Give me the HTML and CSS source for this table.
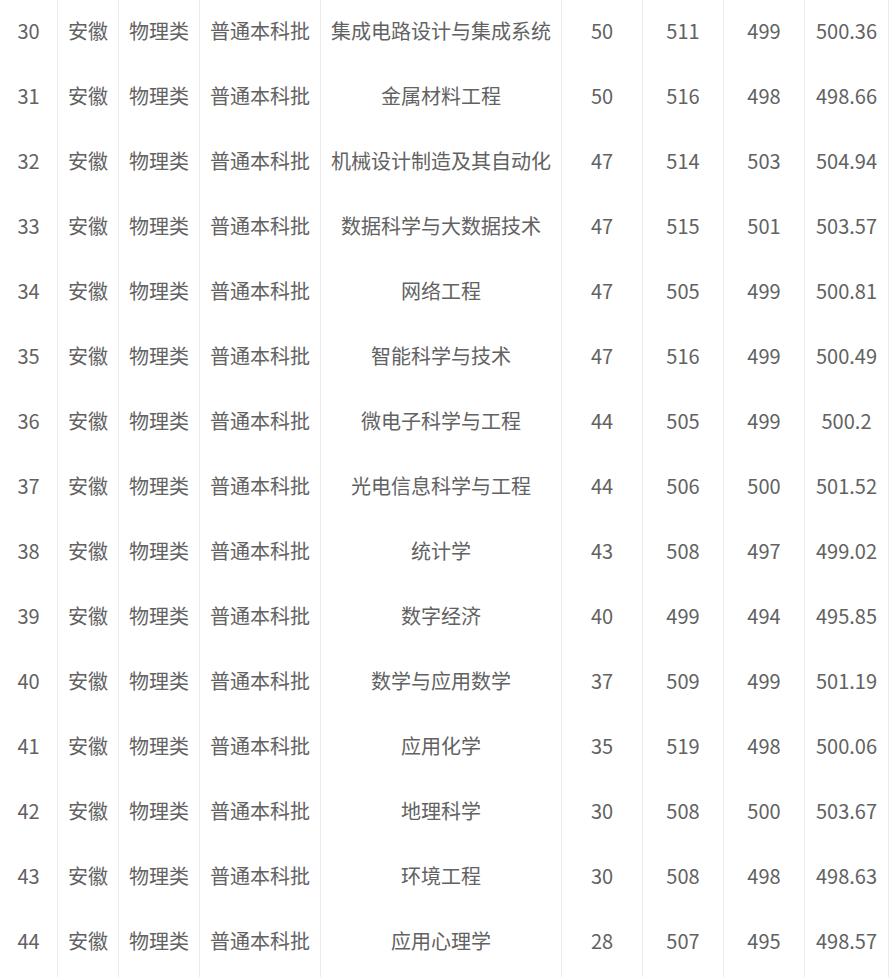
FILE: index.html
```html
<!DOCTYPE html>
<html lang="zh-CN">
<head>
<meta charset="utf-8">
<title>录取分数</title>
<link rel="stylesheet" href="styles.css">
</head>
<body>
<div class="table">
  <div class="row"><div class="c">30</div><div class="c">安徽</div><div class="c">物理类</div><div class="c">普通本科批</div><div class="c">集成电路设计与集成系统</div><div class="c">50</div><div class="c">511</div><div class="c">499</div><div class="c">500.36</div></div>
  <div class="row"><div class="c">31</div><div class="c">安徽</div><div class="c">物理类</div><div class="c">普通本科批</div><div class="c">金属材料工程</div><div class="c">50</div><div class="c">516</div><div class="c">498</div><div class="c">498.66</div></div>
  <div class="row"><div class="c">32</div><div class="c">安徽</div><div class="c">物理类</div><div class="c">普通本科批</div><div class="c">机械设计制造及其自动化</div><div class="c">47</div><div class="c">514</div><div class="c">503</div><div class="c">504.94</div></div>
  <div class="row"><div class="c">33</div><div class="c">安徽</div><div class="c">物理类</div><div class="c">普通本科批</div><div class="c">数据科学与大数据技术</div><div class="c">47</div><div class="c">515</div><div class="c">501</div><div class="c">503.57</div></div>
  <div class="row"><div class="c">34</div><div class="c">安徽</div><div class="c">物理类</div><div class="c">普通本科批</div><div class="c">网络工程</div><div class="c">47</div><div class="c">505</div><div class="c">499</div><div class="c">500.81</div></div>
  <div class="row"><div class="c">35</div><div class="c">安徽</div><div class="c">物理类</div><div class="c">普通本科批</div><div class="c">智能科学与技术</div><div class="c">47</div><div class="c">516</div><div class="c">499</div><div class="c">500.49</div></div>
  <div class="row"><div class="c">36</div><div class="c">安徽</div><div class="c">物理类</div><div class="c">普通本科批</div><div class="c">微电子科学与工程</div><div class="c">44</div><div class="c">505</div><div class="c">499</div><div class="c">500.2</div></div>
  <div class="row"><div class="c">37</div><div class="c">安徽</div><div class="c">物理类</div><div class="c">普通本科批</div><div class="c">光电信息科学与工程</div><div class="c">44</div><div class="c">506</div><div class="c">500</div><div class="c">501.52</div></div>
  <div class="row"><div class="c">38</div><div class="c">安徽</div><div class="c">物理类</div><div class="c">普通本科批</div><div class="c">统计学</div><div class="c">43</div><div class="c">508</div><div class="c">497</div><div class="c">499.02</div></div>
  <div class="row"><div class="c">39</div><div class="c">安徽</div><div class="c">物理类</div><div class="c">普通本科批</div><div class="c">数字经济</div><div class="c">40</div><div class="c">499</div><div class="c">494</div><div class="c">495.85</div></div>
  <div class="row"><div class="c">40</div><div class="c">安徽</div><div class="c">物理类</div><div class="c">普通本科批</div><div class="c">数学与应用数学</div><div class="c">37</div><div class="c">509</div><div class="c">499</div><div class="c">501.19</div></div>
  <div class="row"><div class="c">41</div><div class="c">安徽</div><div class="c">物理类</div><div class="c">普通本科批</div><div class="c">应用化学</div><div class="c">35</div><div class="c">519</div><div class="c">498</div><div class="c">500.06</div></div>
  <div class="row"><div class="c">42</div><div class="c">安徽</div><div class="c">物理类</div><div class="c">普通本科批</div><div class="c">地理科学</div><div class="c">30</div><div class="c">508</div><div class="c">500</div><div class="c">503.67</div></div>
  <div class="row"><div class="c">43</div><div class="c">安徽</div><div class="c">物理类</div><div class="c">普通本科批</div><div class="c">环境工程</div><div class="c">30</div><div class="c">508</div><div class="c">498</div><div class="c">498.63</div></div>
  <div class="row"><div class="c">44</div><div class="c">安徽</div><div class="c">物理类</div><div class="c">普通本科批</div><div class="c">应用心理学</div><div class="c">28</div><div class="c">507</div><div class="c">495</div><div class="c">498.57</div></div>
  <div class="row row-tail"><div class="c"></div><div class="c"></div><div class="c"></div><div class="c"></div><div class="c"></div><div class="c"></div><div class="c"></div><div class="c"></div><div class="c"></div></div>
</div>
</body>
</html>
```
FILE: styles.css
```css
html, body {
  margin: 0;
  padding: 0;
  background: #ffffff;
}

body {
  font-family: "Noto Sans CJK SC", "Noto Sans", sans-serif;
  font-size: 20px;
  color: #626262;
  overflow: hidden;
}

.table {
  width: 889px;
}

.row {
  display: grid;
  grid-template-columns: 57px 61px 81px 121px 241px 81px 81px 81px 84px 1px;
  height: 65px;
}

.row::after {
  content: "";
  border-left: 1px solid #ebebeb;
}

.c {
  display: flex;
  align-items: center;
  justify-content: center;
  white-space: nowrap;
  line-height: 1;
  padding-bottom: 3px;
}

.c + .c {
  border-left: 1px solid #ebebeb;
}

.row-tail {
  height: 40px;
}
```
